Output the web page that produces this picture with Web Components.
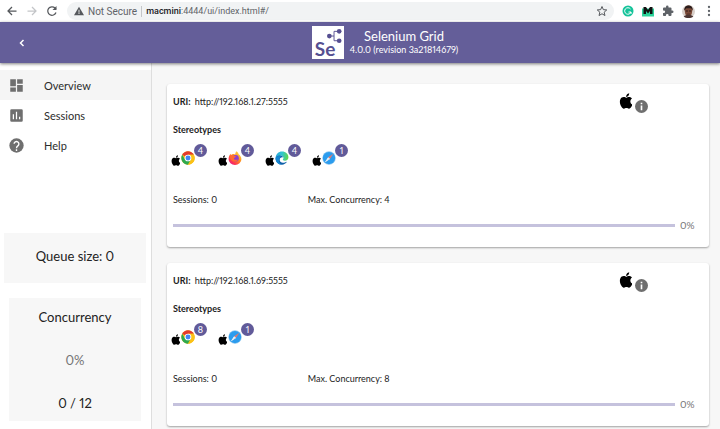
<!DOCTYPE html>
<html lang="en">
<head>
<meta charset="utf-8">
<title>Selenium Grid</title>
<style>
  html, body { margin: 0; height: 100%; }
  body {
    font-family: Lato, "Liberation Sans", sans-serif;
    font-size: 9px;
    font-variant-numeric: proportional-nums;
    color: #222;
    background: #f7f7f7;
    overflow: hidden;
  }
</style>
</head>
<body>
<grid-app></grid-app>

<script>
const apple = `<svg class="apple" viewBox="3 1 18 22" aria-hidden="true"><path d="M18.7 12.7c0-2.7 2.2-4 2.3-4.1-1.3-1.8-3.2-2.1-3.9-2.1-1.6-.2-3.2 1-4.1 1s-2.1-1-3.5-.9c-1.8 0-3.5 1-4.4 2.6-1.9 3.3-.5 8.1 1.3 10.7.9 1.3 2 2.8 3.4 2.7s1.9-.9 3.5-.9 2.1.9 3.5.9c1.5 0 2.4-1.3 3.3-2.6 1-1.5 1.5-3 1.5-3.1-.1 0-2.9-1.1-2.9-4.2zM16 4.8c.7-.9 1.2-2.1 1.1-3.4-1.1.1-2.4.8-3.1 1.6-.7.8-1.3 2.1-1.2 3.3 1.2.1 2.5-.6 3.2-1.5z"/></svg>`;

const browserIcons = {
  chrome: `<svg viewBox="0 0 48 48" role="img" aria-label="Chrome">
    <circle cx="24" cy="24" r="23" fill="#fbc116"/>
    <path d="M24 24 4.1 12.5A23 23 0 0 1 43.9 12.5H24z" fill="#e33b2e"/>
    <path d="M4.1 12.5A23 23 0 0 0 24 47L34 29.7 24 35 14 29.7z" fill="#2da94f"/>
    <path d="M24 13h20.2A23 23 0 0 1 24 47l10-17z" fill="#fbc116"/>
    <circle cx="24" cy="24" r="11.5" fill="#fff"/><circle cx="24" cy="24" r="8.5" fill="#4285f4"/></svg>`,
  firefox: `<svg viewBox="0 0 48 48" role="img" aria-label="Firefox">
    <defs><linearGradient id="ff" x1="1" y1="0" x2=".2" y2="1"><stop offset=".1" stop-color="#ffe14a"/><stop offset=".5" stop-color="#ff8a1e"/><stop offset=".8" stop-color="#ff3750"/><stop offset="1" stop-color="#e31587"/></linearGradient></defs>
    <path d="M29 1c5 4 7 7 8 11 3 1 4 2 5 5 3 4 4 7 4 11a22 20 0 0 1-44 0C2 20 4 14 9 9l1 5 5-3c4-1 8 0 10 1 0-4 1-8 4-11z" fill="url(#ff)"/>
    <circle cx="26" cy="25" r="11" fill="#8a3fd0"/>
    <path d="M7 20c4-6 10-7 15-3l5 1c0 3-3 4-5 5-3 2-2 6 3 7 4 1 6-1 9-1-3 7-10 9-17 6C10 32 7 27 7 20z" fill="#ff6a32"/></svg>`,
  edge: `<svg viewBox="0 0 48 48" role="img" aria-label="Edge">
    <defs><linearGradient id="eg" x1="0" y1=".3" x2="1" y2=".4"><stop stop-color="#2aa8e0"/><stop offset=".5" stop-color="#31c5cf"/><stop offset="1" stop-color="#62d94a"/></linearGradient></defs>
    <path d="M2 24C3 11 12 2 24 2c13 0 22 9 22 19 0 7-5 12-12 12-5 0-8-2-7-4 4-4 2-13-7-13-8 0-16 3-18 8z" fill="url(#eg)"/>
    <path d="M2 24c1-6 7-9 15-9 6 0 10 3 11 7-7-2-13 3-12 9 1 8 9 12 18 8 3-1 5-1 7-2-4 6-10 10-17 10C11 47 1 36 2 24z" fill="#0f5fa8"/>
    <path d="M17 25c-6 9-2 18 7 22C11 47 1 36 2 24c3-7 13-9 20-4-2 1-4 3-5 5z" fill="#1688d2"/></svg>`,
  safari: `<svg viewBox="0 0 48 48" role="img" aria-label="Safari">
    <circle cx="24" cy="24" r="23" fill="#8cc5ee"/><circle cx="24" cy="24" r="21" fill="#2b9cee"/>
    <path d="M39 9 27 27l-6-6z" fill="#e0786f"/><path d="M9 39l12-18 6 6z" fill="#fff"/><path d="M9 39l15-15 3 3z" fill="#d5dce5"/></svg>`
};

function define(name, html, setup) {
  const template = document.createElement("template");
  template.innerHTML = html;
  customElements.define(name, class extends HTMLElement {
    constructor() {
      super();
      this.attachShadow({ mode: "open" });
      this.shadowRoot.appendChild(template.content.cloneNode(true));
    }
    connectedCallback() {
      if (setup) setup(this, this.shadowRoot);
    }
  });
}

define("browser-bar", `
  <style>
    :host {
      display: flex; align-items: center; height: 22px; box-sizing: border-box;
      padding: 0 5px 0 6px; background: #fff; color: #5f6368;
      font-family: Roboto, "Liberation Sans", sans-serif; font-size: 10px;
    }
    button { display: flex; border: 0; padding: 0; background: none; color: inherit; }
    svg { width: 12px; height: 12px; display: block; }
    .nav { display: flex; gap: 8px; width: 61px; }
    .address {
      flex: 1; display: flex; align-items: center; gap: 4px; height: 18px;
      box-sizing: border-box; padding: 0 6px 0 7px; border-radius: 9px; background: #f1f3f4;
    }
    .address svg { width: 10px; height: 10px; }
    .address button svg { width: 12px; height: 12px; }
    .sep { width: 1px; height: 11px; background: #c4c6c9; }
    a { flex: 1; color: #5f6368; font-size: 9px; text-decoration: none; }
    a b { color: #202124; font-weight: 500; }
    .tools { display: flex; align-items: center; gap: 8px; padding-left: 8px; }
    .face svg { width: 13px; height: 13px; }
  </style>
  <div class="nav">
    <button aria-label="Back"><svg viewBox="0 0 24 24" fill="none" stroke="#55585c" stroke-width="2.5"><path d="M21 12H4m8-8-8 8 8 8"/></svg></button>
    <button aria-label="Forward"><svg viewBox="0 0 24 24" fill="none" stroke="#c3c5c8" stroke-width="2.5"><path d="M3 12h17m-8-8 8 8-8 8"/></svg></button>
    <button aria-label="Reload"><svg viewBox="0 0 24 24" fill="none" stroke="#55585c" stroke-width="2.5"><path d="M20 15a8.5 8.5 0 1 1-2-9l2 2"/><path d="M21 2v8h-8z" fill="#55585c" stroke="none"/></svg></button>
  </div>
  <div class="address">
    <svg viewBox="0 0 24 24"><path d="M12 2 24 22H0z" fill="#55585c"/><path d="M11 9h2v7h-2zm0 8h2v2h-2z" fill="#fff"/></svg>
    <span>Not Secure</span>
    <span class="sep"></span>
    <a href="#/"><b>macmini</b>:4444/ui/index.html#/</a>
    <button aria-label="Bookmark"><svg viewBox="0 0 24 24" fill="none" stroke="#55585c" stroke-width="2"><path d="m12 3 2.7 6.3 6.8.6-5.2 4.5 1.6 6.7-5.9-3.6-5.9 3.6 1.6-6.7L2.5 9.900l6.800-.6z"/></svg></button>
  </div>
  <div class="tools">
    <button aria-label="Writing assistant"><svg viewBox="0 0 24 24"><circle cx="12" cy="12" r="11" fill="#15c39a"/><path d="M17 8a6.500 6.500 0 1 0 1 6h-5m5 0v4" fill="none" stroke="#fff" stroke-width="2"/></svg></button>
    <button aria-label="Mail extension"><svg viewBox="0 0 24 24"><path d="M0 7h24v16H0z" fill="#2bd39a"/><path d="M3 18V4h5l4 6 4-6h5v14h-5v-6l-4 5-4-5v6z" fill="#111"/></svg></button>
    <button aria-label="Extensions"><svg viewBox="0 0 24 24"><path d="M20.5 11H19V7a2 2 0 0 0-2-2h-4V3.5a2.5 2.5 0 0 0-5 0V5H4a2 2 0 0 0-2 2v3.8h1.5a2.7 2.7 0 0 1 0 5.4H2V20c0 1.1.9 2 2 2h3.8v-1.5a2.7 2.7 0 0 1 5.4 0V22H17a2 2 0 0 0 2-2v-4h1.5a2.5 2.5 0 0 0 0-5z" fill="#5f6368"/></svg></button>
    <button class="face" aria-label="Profile"><svg viewBox="0 0 24 24"><circle cx="12" cy="12" r="12" fill="#d8cfc9"/><path d="M5 10c-1-12 15-12 14 0l-1 6c-2 7-10 7-12 0z" fill="#7b4a38"/><path d="M4 10C3-2 21-2 20 10l-3-4H8z" fill="#2b1d1b"/><path d="M3 21c5-4 13-4 18 0-5 4-13 4-18 0z" fill="#4b3532"/><path d="M7 10h4v2H7zm6 0h4v2h-4zm-4 6h6v1H9z" fill="#33201c"/></svg></button>
    <button aria-label="Menu"><svg viewBox="0 0 24 24" fill="#5f6368"><circle cx="12" cy="4" r="2.3"/><circle cx="12" cy="12" r="2.3"/><circle cx="12" cy="20" r="2.3"/></svg></button>
  </div>
`);

define("app-header", `
  <style>
    :host {
      display: grid; grid-template-columns: 1fr auto 1fr; align-items: center;
      height: 41px; background: #645e99; color: #fff; position: relative; z-index: 1;
      box-shadow: 0 1px 3px rgba(0, 0, 0, .5);
    }
    button { display: flex; width: 12px; margin-left: 16px; padding: 0; border: 0; background: none; }
    button svg { width: 12px; height: 12px; }
    .brand { display: flex; align-items: center; gap: 6px; padding-left: 50px; }
    .logo { width: 32px; height: 33px; display: grid; background: #fff; grid-template-rows: 14px 19px; }
    .logo svg { width: 15px; height: 15px; justify-self: end; padding: 3px 2px 0 0; }
    .logo span { padding-left: 3px; font: bold 19px/18px Lato, sans-serif; color: #564f91; }
    .titles { text-align: center; }
    h1 { margin: 0; font-size: 13px; line-height: 15px; font-weight: 400; }
    p { margin: 0; font-size: 9px; line-height: 12px; }
  </style>
  <button aria-label="Collapse menu"><svg viewBox="0 0 24 24" fill="none" stroke="#fff" stroke-width="3"><path d="m15 6-6 6 6 6"/></svg></button>
  <div class="brand">
    <div class="logo">
      <svg viewBox="0 0 32 32" fill="#564f91"><path d="M6 15h9V5h11M15 15v10h11" fill="none" stroke="#564f91" stroke-width="2"/><circle cx="5" cy="15" r="5"/><circle cx="26" cy="5" r="5"/><circle cx="26" cy="25" r="5"/></svg>
      <span>Se</span>
    </div>
    <div class="titles">
      <h1>Selenium Grid</h1>
      <p>4.0.0 (revision 3a21814679)</p>
    </div>
  </div>
`);

define("nav-item", `
  <style>
    :host { display: block; }
    a {
      display: flex; align-items: center; gap: 20px; height: 30px; padding-left: 9px;
      color: #2c2c2c; font-size: 11px; text-decoration: none;
    }
    :host([selected]) a { background: #f5f5f5; }
    ::slotted(svg) { width: 15px; height: 15px; fill: #6f6f6f; }
  </style>
  <a href="#/"><slot name="icon"></slot><slot></slot></a>
`, (el, root) => root.querySelector("a").setAttribute("href", el.getAttribute("href")));

define("side-bar", `
  <style>
    :host {
      display: flex; flex-direction: column; width: 151px; box-sizing: content-box;
      border-right: 1px solid #dedede; background: #fff; padding-top: 7px;
    }
    section { background: #f7f7f7; text-align: center; font-size: 13px; line-height: 20px; }
    .queue { margin: auto 5px 15px 4px; padding: 13px 0 17px; }
    .load { margin: 0 10px 8px 9px; display: flex; flex-direction: column; gap: 23px; padding: 9px 0 8px; }
    .load .percent { color: #757575; }
  </style>
  <nav>
    <nav-item href="#/" selected><svg slot="icon" viewBox="0 0 24 24"><path d="M2 2h9v11H2zm11 0h9v7h-9zM2 15h9v7H2zm11-4h9v11h-9z"/></svg>Overview</nav-item>
    <nav-item href="#/sessions"><svg slot="icon" viewBox="0 0 24 24"><path fill-rule="evenodd" d="M4 2h16a2 2 0 0 1 2 2v16a2 2 0 0 1-2 2H4a2 2 0 0 1-2-2V4a2 2 0 0 1 2-2zm2 8v8h2v-8zm5-4v12h2V6zm5 8v4h2v-4z"/></svg>Sessions</nav-item>
    <nav-item href="#/help"><svg slot="icon" viewBox="1 1 22 22"><circle cx="12" cy="12" r="10.5"/><path d="M8.5 9.5a3.5 3.5 0 1 1 5.5 3c-1.5 1-2 1.5-2 3.5m0 1.5V20" fill="none" stroke="#fff" stroke-width="2"/></svg>Help</nav-item>
  </nav>
  <section class="queue">Queue size: 0</section>
  <section class="load"><span>Concurrency</span><span class="percent">0%</span><span>0 / 12</span></section>
`);

define("stereo-type", `
  <style>
    :host { display: flex; width: 47px; height: 22px; align-items: flex-end; }
    .apple { width: 9px; height: 11px; margin: 0 1px; }
    .browser { width: 13px; height: 15px; }
    .browser svg { display: block; width: 14px; height: 14px; }
    .count {
      align-self: flex-start; width: 13px; height: 13px; border-radius: 50%;
      background: #615a99; color: #fff; line-height: 13px; text-align: center;
    }
  </style>
  ${apple}<span class="browser"></span><span class="count"><slot></slot></span>
`, (el, root) => {
  root.querySelector(".browser").innerHTML = browserIcons[el.getAttribute("browser")];
});

define("grid-node", `
  <style>
    :host {
      display: block; padding: 0 6px 14px; border-radius: 3px; background: #fff;
      box-shadow: 0 1px 2px rgba(0, 0, 0, .35);
    }
    .top { display: grid; grid-template-columns: 5fr 1fr; align-items: center; height: 34px; }
    .uri b { margin-right: 2px; }
    b, h2 { font-weight: 700; }
    .os { display: flex; align-items: center; gap: 3px; padding-left: 4px; }
    .os .apple { width: 13px; height: 16px; }
    .os button { display: flex; padding: 10px 0 0; border: 0; background: none; }
    .os button svg { width: 13px; height: 13px; }
    h2 { margin: 0; font-size: 9px; line-height: 24px; }
    .types { display: flex; height: 24px; align-items: flex-end; margin: 0 0 24px -3px; }
    .stats { display: grid; grid-template-columns: 1fr 3fr; column-gap: 3px; line-height: 20px; }
    .load { display: flex; align-items: center; gap: 5px; margin-top: 7px; line-height: 16px; }
    progress { flex: 1; appearance: none; height: 3px; border: 0; background: #c5c2dd; }
    progress::-webkit-progress-bar { background: #c5c2dd; }
    progress::-webkit-progress-value { background: #615a99; }
    label { width: 23px; color: #757575; font-size: 10px; }
  </style>
  <div class="top">
    <div class="uri"><b>URI:</b> <span></span></div>
    <div class="os">${apple}<button aria-label="Node details"><svg viewBox="0 0 24 24"><circle cx="12" cy="12" r="12" fill="#6f6f6f"/><path d="M10.5 5h3v3h-3zm0 5h3v9h-3z" fill="#fff"/></svg></button></div>
  </div>
  <h2>Stereotypes</h2>
  <div class="types"><slot></slot></div>
  <div class="stats"><span>Sessions: 0</span><span class="max"></span></div>
  <div class="load"><progress id="load" value="0" max="100"></progress><label for="load">0%</label></div>
`, (el, root) => {
  root.querySelector(".uri span").textContent = el.getAttribute("uri");
  root.querySelector(".max").textContent = "Max. Concurrency: " + el.getAttribute("max");
});

define("grid-app", `
  <style>
    :host { display: flex; flex-direction: column; min-height: 100vh; }
    .body { flex: 1; display: flex; }
    main { flex: 1; display: flex; flex-direction: column; gap: 16px; padding: 21px 11px 3px 15px; }
  </style>
  <browser-bar></browser-bar>
  <app-header></app-header>
  <div class="body">
    <side-bar></side-bar>
    <main>
      <grid-node uri="http://192.168.1.27:5555" max="4">
        <stereo-type browser="chrome">4</stereo-type>
        <stereo-type browser="firefox">4</stereo-type>
        <stereo-type browser="edge">4</stereo-type>
        <stereo-type browser="safari">1</stereo-type>
      </grid-node>
      <grid-node uri="http://192.168.1.69:5555" max="8">
        <stereo-type browser="chrome">8</stereo-type>
        <stereo-type browser="safari">1</stereo-type>
      </grid-node>
    </main>
  </div>
`);
</script>
</body>
</html>
